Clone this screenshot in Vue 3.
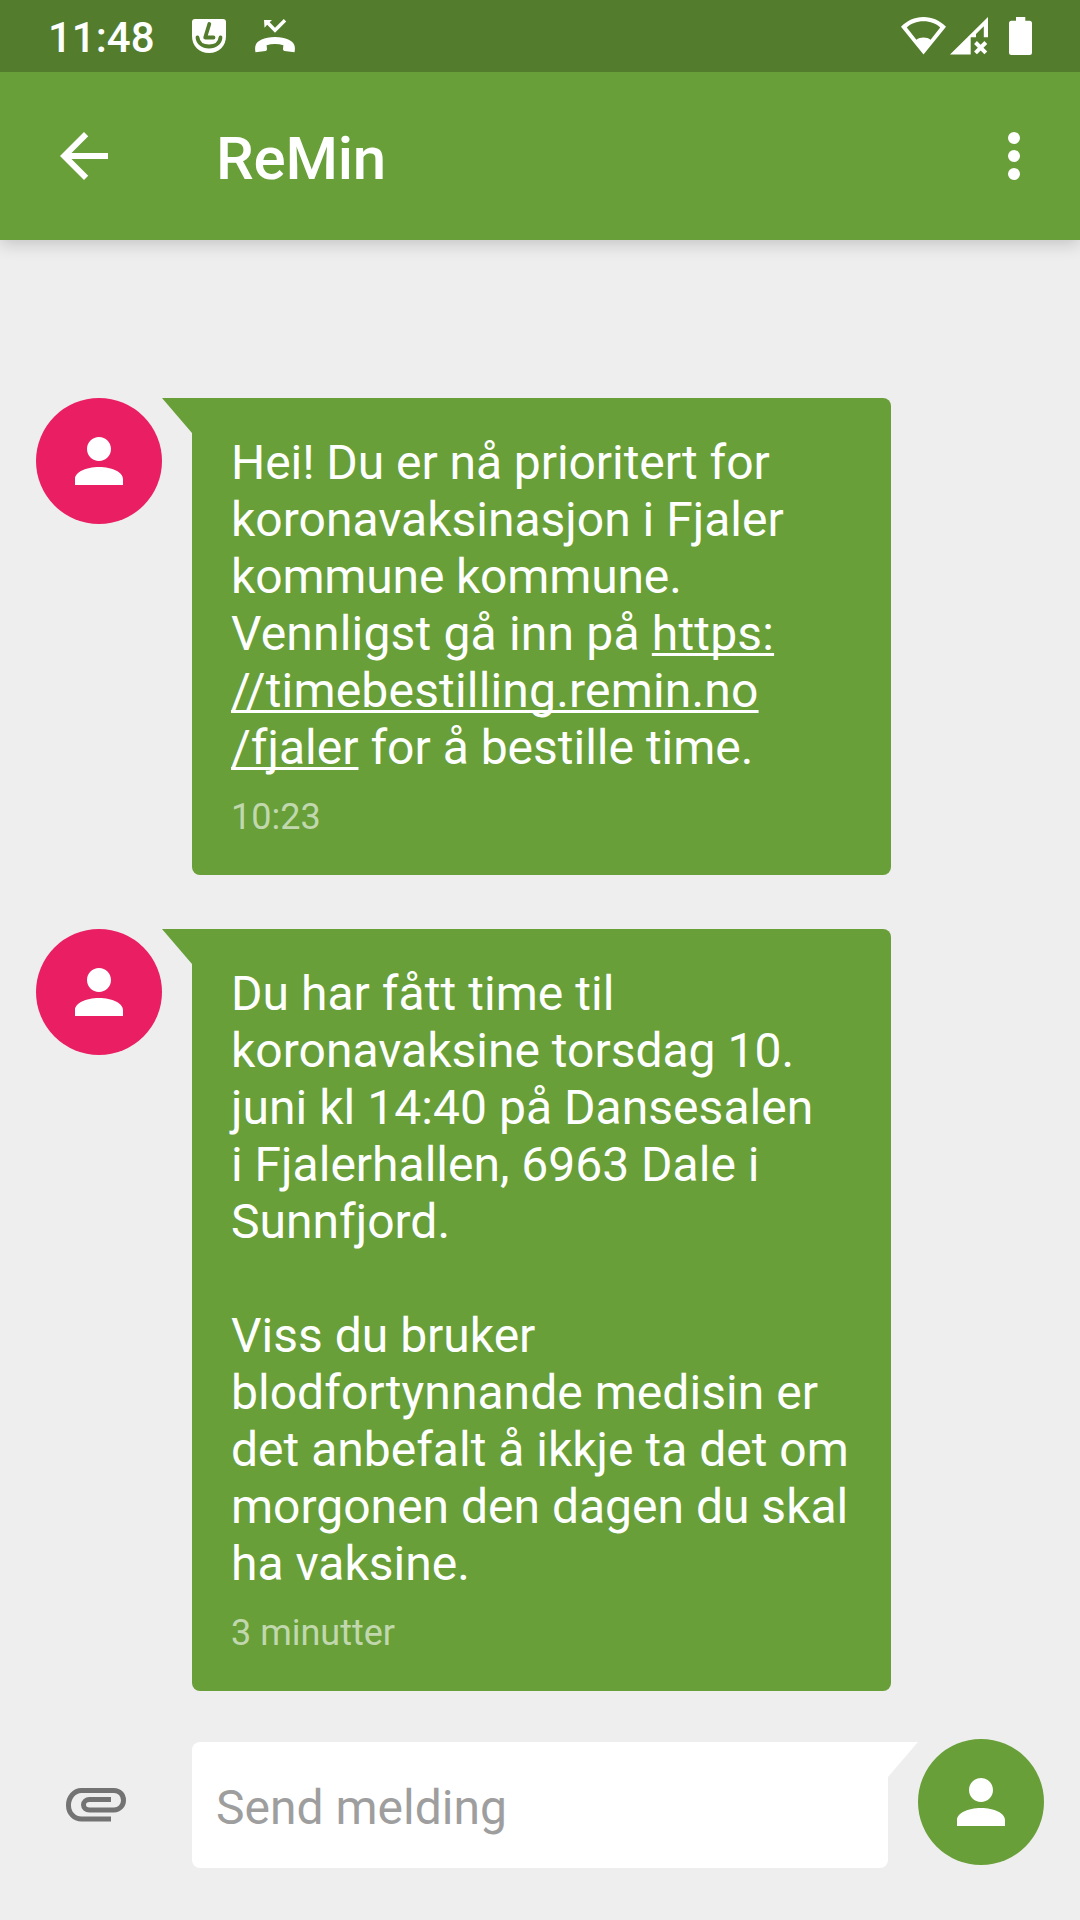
<script setup>
// tracking is the letter-spacing of a line, in px
const messages = [
  {
    id: 1,
    time: '10:23',
    lines: [
      { tracking: -0.06, parts: [{ text: 'Hei! Du er nå prioritert for' }] },
      { parts: [{ text: 'koronavaksinasjon i Fjaler' }] },
      { tracking: -0.16, parts: [{ text: 'kommune kommune.' }] },
      { tracking: 0.18, parts: [{ text: 'Vennligst gå inn på ' }, { text: 'https:', link: true }] },
      { tracking: 0.18, parts: [{ text: '//timebestilling.remin.no', link: true }] },
      { parts: [{ text: '/fjaler', link: true }, { text: ' for å bestille time.' }] },
    ],
  },
  {
    id: 2,
    time: '3 minutter',
    lines: [
      { tracking: 0.04, parts: [{ text: 'Du har fått time til' }] },
      { parts: [{ text: 'koronavaksine torsdag 10.' }] },
      { tracking: 0.04, parts: [{ text: 'juni kl 14:40 på Dansesalen' }] },
      { parts: [{ text: 'i Fjalerhallen, 6963 Dale i' }] },
      { parts: [{ text: 'Sunnfjord.' }] },
      { parts: [] },
      { parts: [{ text: 'Viss du bruker' }] },
      { tracking: 0.04, parts: [{ text: 'blodfortynnande medisin er' }] },
      { parts: [{ text: 'det anbefalt å ikkje ta det om' }] },
      { parts: [{ text: 'morgonen den dagen du skal' }] },
      { parts: [{ text: 'ha vaksine.' }] },
    ],
  },
]
</script>

<template>
  <div class="screen">
    <div class="status-bar">
      <span class="clock">11:48</span>
      <svg class="icon-badge" width="34" height="34" viewBox="0 0 34 34">
        <path d="M3 0H31Q34 0 34 3V17C34 27 27 34 17 34S0 27 0 17V3Q0 0 3 0Z" />
        <path d="M17.3 5L13.2 18.5H21.5M5.5 18.5C6 24 10.5 27.5 17 27.5S28 24 28.5 18.5" />
      </svg>
      <svg class="icon-missed" width="40" height="34" viewBox="0 0 40 34">
        <path d="M9 1H17L14.7 3.3L20 8.7L28.8 0L31.2 2.4L20 13.7L12.2 5.8L9.5 8.8Z" />
        <path d="M20 18C9 18 2 22 .7 26C-.2 28.5 0 31 .5 33.3L10.5 32C11.5 31.8 12 31 12 29.8L11.6 26.3C17 24.4 23 24.4 28.4 26.3L28 29.8C28 31 28.5 31.8 29.5 32L39.5 33.3C40 31 40.2 28.5 39.3 26C38 22 31 18 20 18Z" />
      </svg>
      <div class="status-right">
        <svg width="45" height="38" viewBox="0 0 45 38">
          <path fill-rule="evenodd" d="M22.5 0C13.5 0 6 3.6 0 9.8L22.5 37.5L45 9.8C39 3.6 31.5 0 22.5 0ZM22.5 4.3C29.5 4.3 35 6.6 39.2 10.4L29.6 22.8C27.7 21.2 25.3 20.4 22.5 20.4S17.3 21.2 15.4 22.8L5.8 10.4C10 6.6 15.5 4.3 22.5 4.3Z" />
        </svg>
        <svg class="icon-signal" width="38" height="38" viewBox="0 0 38 38">
          <path d="M38 0V20.2H33.8V9.2L26 17V20.2H20.7V37.5H0Z" />
          <path class="cross" d="M25.5 25.5L35.8 35.8M35.8 25.5L25.5 35.8" />
        </svg>
        <svg class="icon-battery" width="23" height="38" viewBox="0 0 23 38">
          <path d="M7 0H16.3V3.7H20.5Q23 3.7 23 6.2V35.5Q23 38 20.5 38H2.5Q0 38 0 35.5V6.2Q0 3.7 2.5 3.7H7Z" />
        </svg>
      </div>
    </div>

    <header class="app-bar">
      <svg width="72" height="72" viewBox="0 0 24 24">
        <path d="M20 11H7.83l5.59-5.59L12 4l-8 8 8 8 1.41-1.41L7.83 13H20v-2z" />
      </svg>
      <h1>ReMin</h1>
      <svg width="72" height="72" viewBox="0 0 24 24">
        <circle cx="12" cy="6" r="2" />
        <circle cx="12" cy="12" r="2" />
        <circle cx="12" cy="18" r="2" />
      </svg>
    </header>

    <main class="messages">
      <div v-for="message in messages" :key="message.id" class="message">
        <div class="avatar">
          <svg width="72" height="72" viewBox="0 0 24 24">
            <path d="M12 12c2.21 0 4-1.79 4-4s-1.79-4-4-4-4 1.79-4 4 1.79 4 4 4zm0 2c-4.42 0-8 1.79-8 4v2h16v-2c0-2.21-3.58-4-8-4z" />
          </svg>
        </div>
        <svg class="tail" width="30" height="35" viewBox="0 0 30 35">
          <path d="M0 0H30V35Z" />
        </svg>
        <div class="bubble">
          <div
            v-for="(line, i) in message.lines"
            :key="i"
            class="line"
            :style="{ letterSpacing: `${line.tracking || 0}px` }"
          ><span v-for="(part, j) in line.parts" :key="j" :class="{ link: part.link }">{{ part.text }}</span></div>
          <div class="time">{{ message.time }}</div>
        </div>
      </div>
    </main>

    <footer class="composer">
      <svg class="attach" width="60" height="34" viewBox="0 0 60 34">
        <path d="M45 31H15.5C8 31 2.5 25 2.5 17.2S8 2.5 15.5 2.5H48C53.5 2.5 57.5 6.8 57.5 12.2S53.5 22 48 22H23.5C20 22 17.5 19.8 17.5 16.8S20 11.5 23.5 11.5H45" />
      </svg>
      <div class="input">Send melding</div>
      <svg class="tail input-tail" width="30" height="35" viewBox="0 0 30 35">
        <path d="M0 0H30L0 35Z" />
      </svg>
      <div class="avatar own">
        <svg width="72" height="72" viewBox="0 0 24 24">
          <path d="M12 12c2.21 0 4-1.79 4-4s-1.79-4-4-4-4 1.79-4 4 1.79 4 4 4zm0 2c-4.42 0-8 1.79-8 4v2h16v-2c0-2.21-3.58-4-8-4z" />
        </svg>
      </div>
    </footer>
  </div>
</template>

<style>
body {
  margin: 0;
}
</style>

<style scoped>
.screen {
  display: flex;
  flex-direction: column;
  width: 1080px;
  height: 1920px;
  overflow: hidden;
  background: #eeeeee;
  color: #fff;
  font-family: Roboto, sans-serif;
}

svg {
  display: block;
  flex: none;
  fill: #fff;
}

.status-bar {
  display: flex;
  align-items: flex-start;
  position: relative;
  z-index: 2;
  box-sizing: border-box;
  height: 72px;
  padding: 0 48px;
  background: #537d2c;
}

.clock {
  width: 144px;
  padding-top: 13px;
  font-size: 42px;
  font-weight: 500;
  line-height: 50px;
}

.icon-badge {
  margin-top: 19px;
}

.icon-badge path + path {
  fill: none;
  stroke: #537d2c;
  stroke-width: 3.8;
  stroke-linecap: round;
  stroke-linejoin: round;
}

.icon-missed {
  margin: 19px 0 0 29px;
}

.status-right {
  display: flex;
  margin: 16.5px 0 0 auto;
}

.icon-signal {
  margin-left: 4px;
}

.cross {
  stroke: #fff;
  stroke-width: 4;
}

.icon-battery {
  margin-left: 21px;
}

.app-bar {
  display: flex;
  align-items: center;
  position: relative;
  box-sizing: border-box;
  height: 168px;
  padding: 0 30px 0 48px;
  background: #689f38;
  box-shadow: 0 4px 16px rgba(0, 0, 0, 0.18);
}

h1 {
  flex: 1;
  margin: 5px 0 0 96px;
  font-size: 60px;
  font-weight: 500;
  line-height: 70px;
  letter-spacing: -0.2px;
}

.messages {
  display: flex;
  flex-direction: column;
  gap: 54px;
  padding: 158px 36px 0;
}

.message {
  display: flex;
  align-items: flex-start;
}

.avatar {
  display: flex;
  flex: none;
  align-items: center;
  justify-content: center;
  width: 126px;
  height: 126px;
  border-radius: 50%;
  background: #e91e63;
}

.own {
  background: #689f38;
}

.tail {
  fill: #689f38;
}

.bubble {
  box-sizing: border-box;
  width: 699px;
  padding: 36px 0 37px 39px;
  border-radius: 0 8px 8px 8px;
  background: #689f38;
}

.line {
  height: 57px;
  font-size: 48px;
  line-height: 57px;
  white-space: pre;
}

.link {
  text-decoration: underline;
  text-decoration-thickness: 3px;
  text-decoration-skip-ink: none;
  text-underline-offset: 3px;
}

.time {
  margin-top: 20px;
  color: rgba(255, 255, 255, 0.6);
  font-size: 36px;
  line-height: 42px;
}

.composer {
  display: flex;
  align-items: flex-start;
  padding: 48px 36px 0 66px;
}

.attach {
  margin: 49px 66px 0 0;
  fill: none;
  stroke: #737373;
  stroke-width: 5;
}

.input {
  box-sizing: border-box;
  width: 696px;
  height: 126px;
  margin-top: 3px;
  padding: 3px 24px 0;
  border-radius: 8px 0 8px 8px;
  background: #fff;
  color: #9e9e9e;
  font-size: 48px;
  line-height: 126px;
}

.input-tail {
  margin-top: 3px;
  fill: #fff;
}
</style>
